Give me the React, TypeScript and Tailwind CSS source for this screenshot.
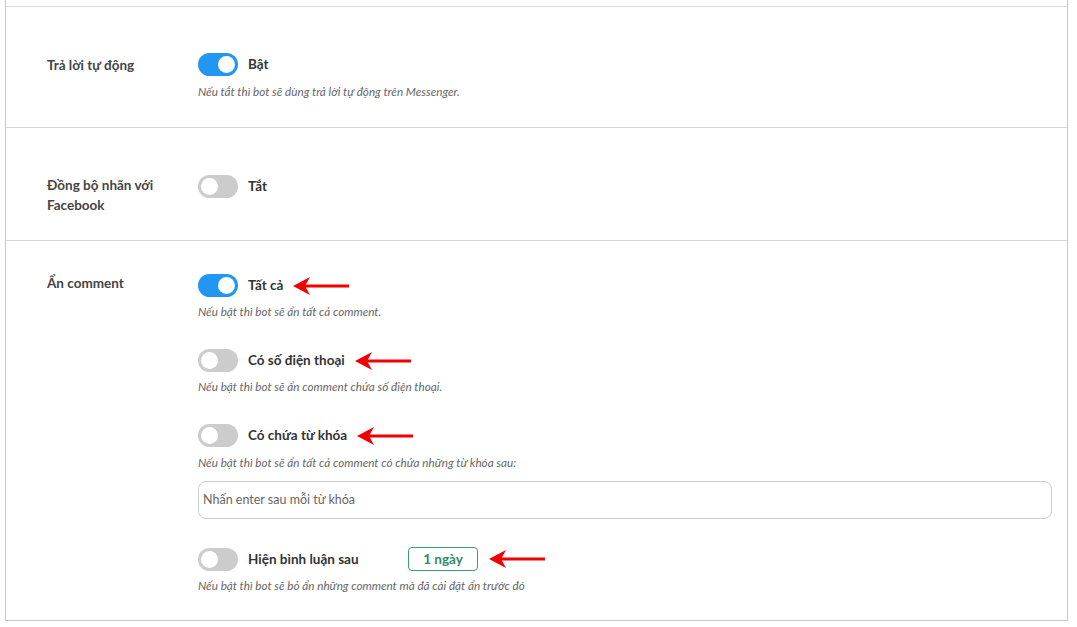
import React from 'react';

const Toggle = ({ on }: { on: boolean }) => (
  <div
    className={`relative w-[40px] h-[23px] rounded-full shrink-0 ${
      on ? 'bg-[#2196f3]' : 'bg-[#cccccc]'
    }`}
  >
    <div
      className={`absolute top-[3px] w-[17px] h-[17px] rounded-full bg-white ${
        on ? 'left-[20px]' : 'left-[3px]'
      }`}
    />
  </div>
);

const Arrow = () => (
  <svg width="56" height="20" viewBox="0 0 56 20" className="shrink-0">
    <line x1="10" y1="10" x2="56" y2="10" stroke="#f20000" strokeWidth="3" />
    <polygon points="0,10 17,1 12,10 17,19" fill="#f20000" />
  </svg>
);

const Desc = ({ children, className = '' }: { children: React.ReactNode; className?: string }) => (
  <p className={`text-[11.7px] leading-[16px] italic text-[#666] ${className}`}>{children}</p>
);

const Label = ({ children }: { children: React.ReactNode }) => (
  <div className="w-[151px] shrink-0 text-[13.5px] leading-[20px] font-bold text-[#444] pr-4">
    {children}
  </div>
);

export default function App() {
  return (
    <div
      className="w-[1077px] h-[627px] bg-white overflow-hidden"
      style={{ fontFamily: 'Lato, "Noto Sans", sans-serif' }}
    >
      <div className="ml-[5px] w-[1063px] border-x border-b border-[#c8c8c8] pt-[6px]">
        {/* Trả lời tự động */}
        <div className="flex border-y border-[#d8d8d8] h-[122px] pl-[41px] pt-[46px]">
          <Label>
            <div className="mt-[2px]">Trả lời tự động</div>
          </Label>
          <div>
            <div className="flex items-center gap-[10px]">
              <Toggle on />
              <span className="text-[13.5px] font-bold text-[#333]">Bật</span>
            </div>
            <Desc className="mt-[7px]">Nếu tắt thì bot sẽ dùng trả lời tự động trên Messenger.</Desc>
          </div>
        </div>

        {/* Đồng bộ nhãn */}
        <div className="flex border-b border-[#d8d8d8] h-[113px] pl-[41px] pt-[47px]">
          <Label>
            Đồng bộ nhãn với
            <br />
            Facebook
          </Label>
          <div className="flex items-start gap-[10px]">
            <Toggle on={false} />
            <span className="text-[13.5px] leading-[23px] font-bold text-[#333]">Tắt</span>
          </div>
        </div>

        {/* Ẩn comment */}
        <div className="flex h-[379px] pl-[41px] pt-[33px]">
          <Label>
            <div className="-mt-[1px]">Ẩn comment</div>
          </Label>
          <div className="flex-1 pr-[15px]">
            <div className="flex items-center gap-[10px]">
              <Toggle on />
              <span className="text-[13.5px] font-bold text-[#333]">Tất cả</span>
              <Arrow />
            </div>
            <Desc className="mt-[6px]">Nếu bật thì bot sẽ ẩn tất cả comment.</Desc>

            <div className="flex items-center gap-[10px] mt-[30px]">
              <Toggle on={false} />
              <span className="text-[13.5px] font-bold text-[#333]">Có số điện thoại</span>
              <Arrow />
            </div>
            <Desc className="mt-[6px]">Nếu bật thì bot sẽ ẩn comment chứa số điện thoại.</Desc>

            <div className="flex items-center gap-[10px] mt-[30px]">
              <Toggle on={false} />
              <span className="text-[13.5px] font-bold text-[#333]">Có chứa từ khóa</span>
              <Arrow />
            </div>
            <Desc className="mt-[7px]">Nếu bật thì bot sẽ ẩn tất cả comment có chứa những từ khóa sau:</Desc>
            <div className="mt-[11px] h-[38px] w-[854px] border border-[#cccccc] rounded-[8px] flex items-center px-[4px]">
              <span className="text-[12.5px] text-[#666]">Nhấn enter sau mỗi từ khóa</span>
            </div>

            <div className="flex items-center mt-[28px]">
              <Toggle on={false} />
              <span className="ml-[10px] w-[160px] text-[13.5px] font-bold text-[#333]">Hiện bình luận sau</span>
              <span className="h-[24px] w-[70px] border border-[#3a9d6e] rounded-[4px] flex items-center justify-center text-[13.5px] font-bold text-[#2e8b6a]">
                1 ngày
              </span>
              <span className="ml-[11px] flex">
                <Arrow />
              </span>
            </div>
            <Desc className="mt-[6px]">Nếu bật thì bot sẽ bỏ ẩn những comment mà đã cài đặt ẩn trước đó</Desc>
          </div>
        </div>
      </div>
    </div>
  );
}
